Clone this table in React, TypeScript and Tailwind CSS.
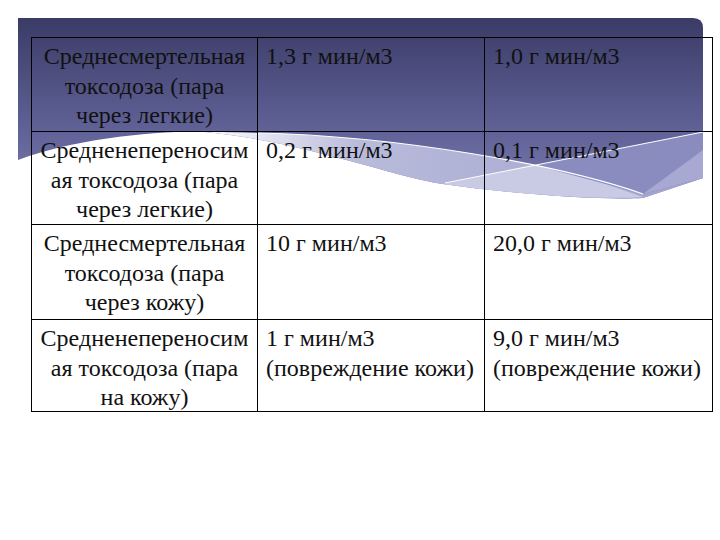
import React from "react";

const firstCol: string[][] = [
  ["Среднесмертельная", "токсодоза (пара", "через легкие)"],
  ["Средненепереносим", "ая токсодоза (пара", "через легкие)"],
  ["Среднесмертельная", "токсодоза (пара", "через кожу)"],
  ["Средненепереносим", "ая токсодоза (пара", "на кожу)"],
];

const second: string[][] = [
  ["1,3 г мин/м3"],
  ["0,2 г мин/м3"],
  ["10 г мин/м3"],
  ["1 г мин/м3", "(повреждение кожи)"],
];

const third: string[][] = [
  ["1,0 г мин/м3"],
  ["0,1 г мин/м3"],
  ["20,0 г мин/м3"],
  ["9,0 г мин/м3", "(повреждение кожи)"],
];

function Background() {
  return (
    <svg className="absolute inset-0" width="720" height="540" viewBox="0 0 720 540">
      <defs>
        <linearGradient id="g" x1="0" y1="18" x2="0" y2="200" gradientUnits="userSpaceOnUse">
          <stop offset="0" stopColor="#3a3b66" />
          <stop offset="0.6" stopColor="#5f6196" />
          <stop offset="1" stopColor="#7a7cb0" />
        </linearGradient>
        <linearGradient id="c" x1="200" y1="0" x2="650" y2="0" gradientUnits="userSpaceOnUse">
          <stop offset="0" stopColor="#ffffff" />
          <stop offset="0.35" stopColor="#b9bbdb" />
          <stop offset="1" stopColor="#a3a5cf" />
        </linearGradient>
      </defs>
      <path d="M18,18 H693 Q703,18 703,28 V200 H18 Z" fill="url(#g)" />
      <path
        d="M0,540 L0,160 L18,160 C70,140 150,131 200,131.5 C300,140 390,176 443,184 C520,195 600,200 643,198 L703,178 L720,178 L720,540 Z"
        fill="#ffffff"
      />
      <path
        d="M200,131.5 C220,132 240,132.5 257,133 C400,136 560,165 643,194 L703,178 L643,198 C600,200 520,195 443,184 C390,176 300,140 200,131.5 Z"
        fill="url(#c)"
      />
      <path d="M443,184 L535,165 L600,182 L643,197 C600,200 520,195 443,184 Z" fill="#c9cae3" />
      <path d="M535,165 L703,132 L703,178 L643,194 Z" fill="#8a8cc0" />
      <path d="M643,194 L703,178 L703,150 Z" fill="#a7a9d2" />
      <path d="M257,133 C400,136 560,165 643,194" stroke="#ffffff" strokeWidth="1.2" fill="none" />
      <path d="M445,183 L703,132" stroke="#ffffff" strokeWidth="1" fill="none" />
    </svg>
  );
}

function Lines({ lines }: { lines: string[] }) {
  return (
    <>
      {lines.map((l, j) => (
        <div key={j} className="whitespace-nowrap">
          {l}
        </div>
      ))}
    </>
  );
}

export default function App() {
  return (
    <div className="relative w-[720px] h-[540px] bg-white overflow-hidden">
      <Background />
      <div className="relative pl-[31px] pt-[37px]">
        <div className="grid w-[682px] grid-cols-[226px_227px_228px] grid-rows-[94px_93px_95px_92px] border-r border-b border-black font-['Liberation_Serif'] text-[24px] leading-[29.5px] text-[#111]">
          {firstCol.map((c, i) => (
            <React.Fragment key={i}>
              <div className="border-l border-t border-black pt-[4px] text-center">
                <Lines lines={c} />
              </div>
              <div className="border-l border-t border-black pt-[4px] pl-[8px]">
                <Lines lines={second[i]} />
              </div>
              <div className="border-l border-t border-black pt-[4px] pl-[8px]">
                <Lines lines={third[i]} />
              </div>
            </React.Fragment>
          ))}
        </div>
      </div>
    </div>
  );
}
